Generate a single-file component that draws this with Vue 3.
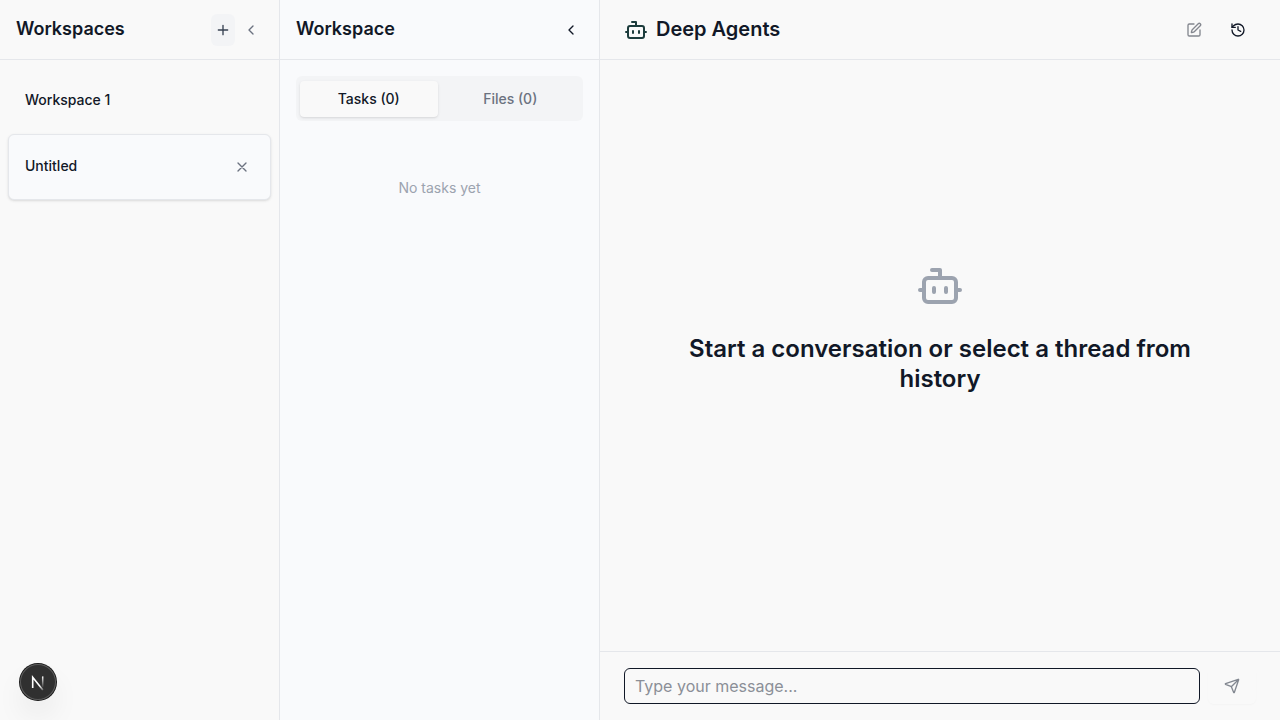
<script setup>
import { ref } from 'vue'
const message = ref('')
const tabs = ['Tasks (0)', 'Files (0)']
const active = ref(0)
</script>

<template>
  <div class="app">
    <aside class="sidebar">
      <header class="bar">
        <h2>Workspaces</h2>
        <div class="actions">
          <button class="add"><svg class="i16" viewBox="0 0 24 24"><path d="M5 12h14M12 5v14" /></svg></button>
          <button class="fold"><svg class="i16" viewBox="0 0 24 24"><path d="m15 18-6-6 6-6" /></svg></button>
        </div>
      </header>
      <div class="list">
        <div class="item"><span>Workspace 1</span></div>
        <div class="item selected">
          <span>Untitled</span>
          <button class="close"><svg class="i16" viewBox="0 0 24 24"><path d="M18 6 6 18M6 6l12 12" /></svg></button>
        </div>
      </div>
    </aside>

    <section class="panel">
      <header class="bar">
        <h2>Workspace</h2>
        <button class="fold dark"><svg class="i16" viewBox="0 0 24 24"><path d="m15 18-6-6 6-6" /></svg></button>
      </header>
      <div class="panel-body">
        <div class="tabs">
          <button v-for="(t, i) in tabs" :key="t" class="tab" :class="{ on: i === active }" @click="active = i">{{ t }}</button>
        </div>
        <p class="none">No tasks yet</p>
      </div>
    </section>

    <main class="chat">
      <header class="bar chat-bar">
        <div class="brand">
          <svg class="i24" viewBox="0 0 24 24"><path d="M12 8V4H8" /><rect x="4" y="8" width="16" height="12" rx="2" /><path d="M2 14h2M20 14h2M15 13v2M9 13v2" /></svg>
          <h1>Deep Agents</h1>
        </div>
        <div class="tools">
          <button class="tool faded"><svg class="i16" viewBox="0 0 24 24"><path d="M12 3H5a2 2 0 0 0-2 2v14a2 2 0 0 0 2 2h14a2 2 0 0 0 2-2v-7" /><path d="M18.375 2.625a1 1 0 0 1 3 3l-9.013 9.014a2 2 0 0 1-.853.505l-2.873.84a.5.5 0 0 1-.62-.62l.84-2.873a2 2 0 0 1 .506-.852z" /></svg></button>
          <button class="tool"><svg class="i16" viewBox="0 0 24 24"><path d="M3 12a9 9 0 1 0 9-9 9.75 9.75 0 0 0-6.74 2.74L3 8" /><path d="M3 3v5h5M12 7v5l4 2" /></svg></button>
        </div>
      </header>
      <div class="empty">
        <svg class="i48" viewBox="0 0 24 24"><path d="M12 8V4H8" /><rect x="4" y="8" width="16" height="12" rx="2" /><path d="M2 14h2M20 14h2M15 13v2M9 13v2" /></svg>
        <h2>Start a conversation or select a thread from history</h2>
      </div>
      <form class="composer" @submit.prevent>
        <input v-model="message" placeholder="Type your message..." />
        <button class="send"><svg class="i16" viewBox="0 0 24 24"><path d="M14.536 21.686a.5.5 0 0 0 .937-.024l6.5-19a.496.496 0 0 0-.635-.635l-19 6.5a.5.5 0 0 0-.024.937l7.93 3.18a2 2 0 0 1 1.112 1.11zM21.854 2.147l-10.94 10.939" /></svg></button>
      </form>
    </main>

    <div class="dev-badge">
      <svg class="mark" viewBox="0 0 36 36">
        <defs>
          <linearGradient id="diag" x1="14" y1="14" x2="24" y2="26" gradientUnits="userSpaceOnUse"><stop offset=".6" stop-color="#fff" /><stop offset="1" stop-color="#fff" stop-opacity=".2" /></linearGradient>
          <linearGradient id="stem" x1="0" y1="12" x2="0" y2="24" gradientUnits="userSpaceOnUse"><stop offset="0" stop-color="#fff" /><stop offset="1" stop-color="#fff" stop-opacity="0" /></linearGradient>
        </defs>
        <path d="M12.7 24V13.2L22.9 26" stroke="url(#diag)" stroke-width="1.6" />
        <path d="M22.7 12.4v11" stroke="url(#stem)" stroke-width="1.5" />
      </svg>
    </div>
  </div>
</template>

<style>
body { overflow: hidden; }
</style>

<style scoped>
* { box-sizing: border-box; }
.app { position: relative; display: flex; width: 100vw; height: 100vh; background: #f9f9f9; color: #111827; font-family: Inter, sans-serif; font-size: 14px; }
h1, h2, p { margin: 0; }
button { display: flex; align-items: center; justify-content: center; border: 0; padding: 0; background: none; color: inherit; font: inherit; }
svg { display: block; flex: none; fill: none; stroke: currentColor; stroke-width: 2; stroke-linecap: round; stroke-linejoin: round; }
.i16 { width: 16px; height: 16px; }
.i24 { width: 24px; height: 24px; color: #1c3c3c; }
.i48 { width: 48px; height: 48px; color: #9ca3af; }
.bar { display: flex; flex: none; align-items: center; justify-content: space-between; height: 60px; padding: 0 16px; border-bottom: 1px solid #e5e7eb; }
.bar h2 { font-size: 18px; font-weight: 600; line-height: 28px; margin-bottom: 2px; }
.sidebar { flex: none; width: 280px; border-right: 1px solid #e5e7eb; }
.actions { display: flex; align-items: center; gap: 4px; color: #6b7280; }
.add { width: 24px; height: 32px; border-radius: 6px; background: #f3f4f6; color: #374151; }
.fold { width: 24px; height: 32px; }
.dark { color: #111827; }
.list { display: flex; flex-direction: column; padding: 8px; }
.item { display: flex; align-items: center; justify-content: space-between; height: 66px; padding: 0 16px; border: 1px solid transparent; border-radius: 6px; font-weight: 500; }
.item span { line-height: 20px; margin-bottom: 2px; }
.selected { background: #f9fafc; border-color: #e5e7eb; box-shadow: 0 1px 3px rgba(0, 0, 0, .1), 0 1px 2px -1px rgba(0, 0, 0, .1); }
.close { width: 24px; height: 24px; color: #6b7280; }
.panel { flex: none; width: 320px; border-right: 1px solid #e5e7eb; background: #f9fafc; }
.panel-body { padding: 16px; }
.tabs { display: grid; grid-template-columns: 1fr 1fr; gap: 4px; height: 45px; padding: 5px 4px 4px; border-radius: 6px; background: #f3f4f6; }
.tab { padding-bottom: 2px; border-radius: 4px; color: #6b7280; font-weight: 500; }
.on { background: #f9f9f9; color: #111827; box-shadow: 0 1px 3px rgba(0, 0, 0, .1), 0 1px 2px -1px rgba(0, 0, 0, .1); }
.none { margin-top: 57px; color: #9ca3af; line-height: 20px; text-align: center; }
.chat { display: flex; flex: 1; flex-direction: column; min-width: 0; }
.chat-bar { padding: 0 24px; }
.brand { display: flex; align-items: center; gap: 8px; }
h1 { font-size: 20px; font-weight: 600; line-height: 28px; margin-bottom: 2px; }
.tools { display: flex; gap: 8px; }
.tool { width: 36px; height: 36px; }
.faded { opacity: .5; }
.empty { display: flex; flex: 1; flex-direction: column; align-items: center; justify-content: center; padding: 0 64px 56px; }
.empty h2 { margin-top: 24px; font-size: 24px; font-weight: 600; line-height: 30px; text-align: center; }
.composer { display: flex; gap: 8px; height: 69px; padding: 16px 24px; border-top: 1px solid #e5e7eb; }
input { flex: 1; min-width: 0; height: 36px; padding: 0 10px; border: 1px solid #111827; border-radius: 6px; outline: 0; background: transparent; color: #111827; font: 16px Inter, sans-serif; }
input::placeholder { color: #8b8f97; opacity: 1; }
.send { width: 48px; height: 36px; border-radius: 6px; color: #838891; box-shadow: 0 1px 2px rgba(0, 0, 0, .025); }
.dev-badge { position: absolute; left: 20px; top: 664px; width: 36px; height: 36px; border-radius: 50%; background: #303030; box-shadow: 0 0 0 1px #171717, inset 0 0 0 1px #5c5c5c, 0 16px 32px -8px rgba(0, 0, 0, .2); }
.mark { width: 36px; height: 36px; stroke-linecap: butt; stroke-linejoin: miter; }
</style>
